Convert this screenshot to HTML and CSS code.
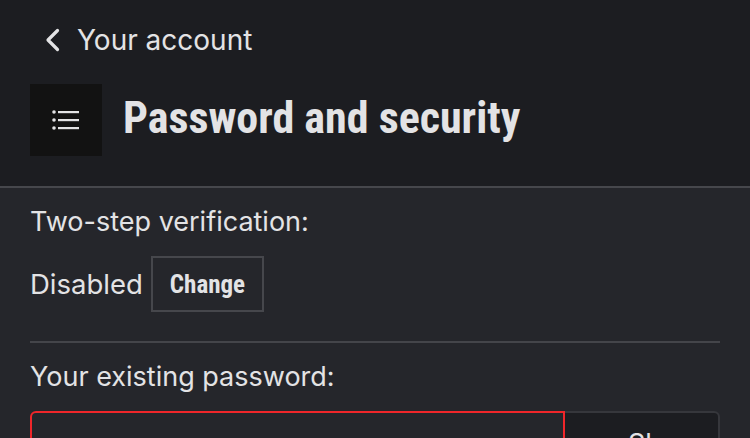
FILE: index.html
```html
<!DOCTYPE html>
<html lang="en">

<head>
  <meta charset="UTF-8" />
  <meta name="viewport" content="width=device-width, initial-scale=1.0" />
  <title>Password and security</title>
  <link rel="stylesheet" href="styles.css">
</head>

<body>
  <header class="head">
    <a class="back" href="#">
      <svg class="back-icon" viewBox="0 0 16 24" width="16" height="24">
        <path d="M13 2.5 L3.5 12 L13 21.5" fill="none" stroke="currentColor" stroke-width="3.2" stroke-linecap="round" stroke-linejoin="round" />
      </svg>
      <span>Your account</span>
    </a>
    <div class="title-row">
      <button class="menu-btn" type="button" aria-label="Menu">
        <svg viewBox="0 0 28 22" width="28" height="22">
          <circle cx="2" cy="3" r="1.8" fill="currentColor" />
          <circle cx="2" cy="11" r="1.8" fill="currentColor" />
          <circle cx="2" cy="19" r="1.8" fill="currentColor" />
          <rect x="6" y="2" width="21" height="2.2" fill="currentColor" />
          <rect x="6" y="10" width="21" height="2.2" fill="currentColor" />
          <rect x="6" y="18" width="21" height="2.2" fill="currentColor" />
        </svg>
      </button>
      <h1>Password and security</h1>
    </div>
  </header>

  <main class="content">
    <section class="block">
      <p class="label">Two-step verification:</p>
      <div class="status">
        <span>Disabled</span>
        <button class="change" type="button">Change</button>
      </div>
    </section>
    <section class="block">
      <p class="label">Your existing password:</p>
      <div class="field">
        <input class="pass-input" type="password" />
        <button class="show" type="button">Show</button>
      </div>
    </section>
  </main>
</body>

</html>
```

FILE: styles.css
```css
* {
  box-sizing: border-box;
}

html {
  font-family: Inter, "Noto Sans", sans-serif;
}

body {
  margin: 0;
  background: #25262b;
  color: #e3e3e5;
  overflow: hidden;
}

.head {
  background: #1c1d21;
  border-bottom: 2px solid #46474c;
  padding: 22px 30px 30px;
}

.back {
  display: flex;
  align-items: center;
  gap: 16px;
  color: #e3e3e5;
  text-decoration: none;
  font-size: 28px;
  height: 36px;
  padding-left: 14px;
}

.back-icon {
  width: 17px;
  height: 24px;
}

.title-row {
  display: flex;
  align-items: center;
  gap: 21px;
  margin-top: 26px;
}

.menu-btn {
  width: 72px;
  height: 72px;
  border: none;
  background: #121212;
  color: #e3e3e5;
  display: grid;
  place-items: center;
  padding: 0;
}

h1 {
  margin: 0 0 4px;
  font-family: Roboto, sans-serif;
  font-stretch: 75%;
  font-weight: 700;
  font-size: 44px;
  color: #e3e3e5;
}

.content {
  padding: 0 30px;
}

.block {
  padding: 16px 0 0;
}

.block + .block {
  border-top: 2px solid #44454a;
  margin-top: 29px;
  padding-top: 16px;
}

.label {
  margin: 0;
  font-size: 27px;
  line-height: 36px;
}

.status {
  display: flex;
  align-items: center;
  gap: 8px;
  margin-top: 16px;
  font-size: 27.5px;
}

.change {
  height: 56px;
  padding: 0 17px;
  background: transparent;
  border: 2px solid #46474c;
  color: #e3e3e5;
  font-family: Roboto, sans-serif;
  font-stretch: 75%;
  font-weight: 700;
  font-size: 25px;
}

.field {
  display: flex;
  margin-top: 16px;
}

.pass-input {
  width: 535px;
  height: 60px;
  background: #25262b;
  border: 2px solid #f0262a;
  border-radius: 6px 0 0 6px;
  outline: none;
}

.show {
  width: 155px;
  height: 60px;
  background: #1c1d21;
  border: 2px solid #36373c;
  border-left: none;
  border-radius: 0 6px 6px 0;
  color: #e3e3e5;
  font-family: Inter, sans-serif;
  font-size: 27px;
  text-align: left;
  padding: 4px 0 0 63px;
}
```
